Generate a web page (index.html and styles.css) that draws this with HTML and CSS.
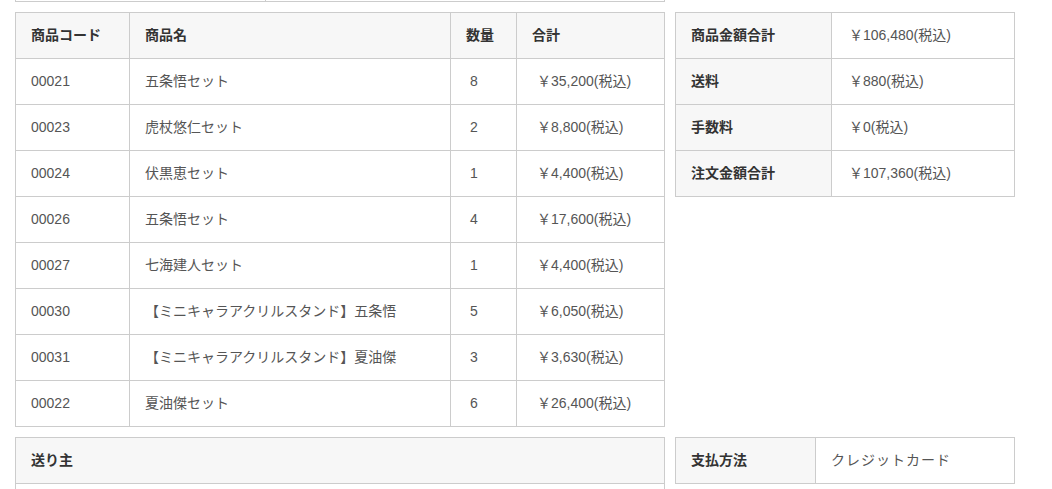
FILE: index.html
```html
<!DOCTYPE html>
<html lang="ja">
<head>
<meta charset="utf-8">
<title>注文詳細</title>
<link rel="stylesheet" href="styles.css">
</head>
<body>
<div class="page">
  <div class="prev">
    <div class="prev-cell"></div>
    <div class="prev-cell last"></div>
  </div>

  <div class="row">
    <div class="items grid">
      <div class="cell th">商品コード</div>
      <div class="cell th">商品名</div>
      <div class="cell th">数量</div>
      <div class="cell th">合計</div>

      <div class="cell">00021</div><div class="cell">五条悟セット</div><div class="cell qty">8</div><div class="cell amt">￥35,200(税込)</div>
      <div class="cell">00023</div><div class="cell">虎杖悠仁セット</div><div class="cell qty">2</div><div class="cell amt">￥8,800(税込)</div>
      <div class="cell">00024</div><div class="cell">伏黒恵セット</div><div class="cell qty">1</div><div class="cell amt">￥4,400(税込)</div>
      <div class="cell">00026</div><div class="cell">五条悟セット</div><div class="cell qty">4</div><div class="cell amt">￥17,600(税込)</div>
      <div class="cell">00027</div><div class="cell">七海建人セット</div><div class="cell qty">1</div><div class="cell amt">￥4,400(税込)</div>
      <div class="cell">00030</div><div class="cell">【ミニキャラアクリルスタンド】五条悟</div><div class="cell qty">5</div><div class="cell amt">￥6,050(税込)</div>
      <div class="cell">00031</div><div class="cell">【ミニキャラアクリルスタンド】夏油傑</div><div class="cell qty">3</div><div class="cell amt">￥3,630(税込)</div>
      <div class="cell">00022</div><div class="cell">夏油傑セット</div><div class="cell qty">6</div><div class="cell amt">￥26,400(税込)</div>
    </div>

    <div class="summary grid">
      <div class="cell th">商品金額合計</div><div class="cell sum">￥106,480(税込)</div>
      <div class="cell th">送料</div><div class="cell sum">￥880(税込)</div>
      <div class="cell th">手数料</div><div class="cell sum">￥0(税込)</div>
      <div class="cell th">注文金額合計</div><div class="cell sum">￥107,360(税込)</div>
    </div>
  </div>

  <div class="row">
    <div class="sender">
      <div class="cell th wide">送り主</div>
      <div class="sender-body"></div>
    </div>
    <div class="payment grid">
      <div class="cell th">支払方法</div><div class="cell spaced">クレジットカード</div>
    </div>
  </div>
</div>
</body>
</html>
```

FILE: styles.css
```css
* {
  box-sizing: border-box;
}

html, body {
  margin: 0;
  padding: 0;
  background: #ffffff;
  height: 489px;
  overflow: hidden;
}

body {
  font-family: "Liberation Sans", "Noto Sans CJK JP", sans-serif;
  font-size: 14px;
  color: #555555;
}

.page {
  padding-left: 15px;
}

.prev {
  display: flex;
  width: 650px;
  height: 2px;
  border-left: 1px solid #cccccc;
  border-right: 1px solid #cccccc;
  border-bottom: 1px solid #cccccc;
}

.prev-cell {
  width: 250px;
  border-right: 1px solid #cccccc;
}

.prev-cell.last {
  flex: 1;
  border-right: none;
}

.row {
  display: flex;
  align-items: flex-start;
  gap: 10px;
  margin-top: 10px;
}

.grid {
  display: grid;
  border-top: 1px solid #cccccc;
  border-left: 1px solid #cccccc;
}

.items {
  width: 650px;
  grid-template-columns: 114px 321px 66px 148px;
}

.summary {
  width: 340px;
  grid-template-columns: 156px 183px;
}

.payment {
  width: 340px;
  grid-template-columns: 140px 199px;
}

.cell {
  height: 46px;
  display: flex;
  align-items: center;
  padding: 0 15px 2px;
  border-right: 1px solid #cccccc;
  border-bottom: 1px solid #cccccc;
  white-space: nowrap;
  line-height: 20px;
}

.th {
  background: #f7f7f7;
  color: #333333;
  font-weight: 700;
}

.qty {
  padding-left: 19px;
}

.amt {
  padding-left: 20px;
}

.sum {
  padding-left: 17px;
}

.spaced {
  letter-spacing: 1px;
}

.sender {
  width: 650px;
  border-top: 1px solid #cccccc;
  border-left: 1px solid #cccccc;
  border-right: 1px solid #cccccc;
}

.sender .cell.wide {
  border-right: none;
}

.sender-body {
  height: 6px;
}
```
